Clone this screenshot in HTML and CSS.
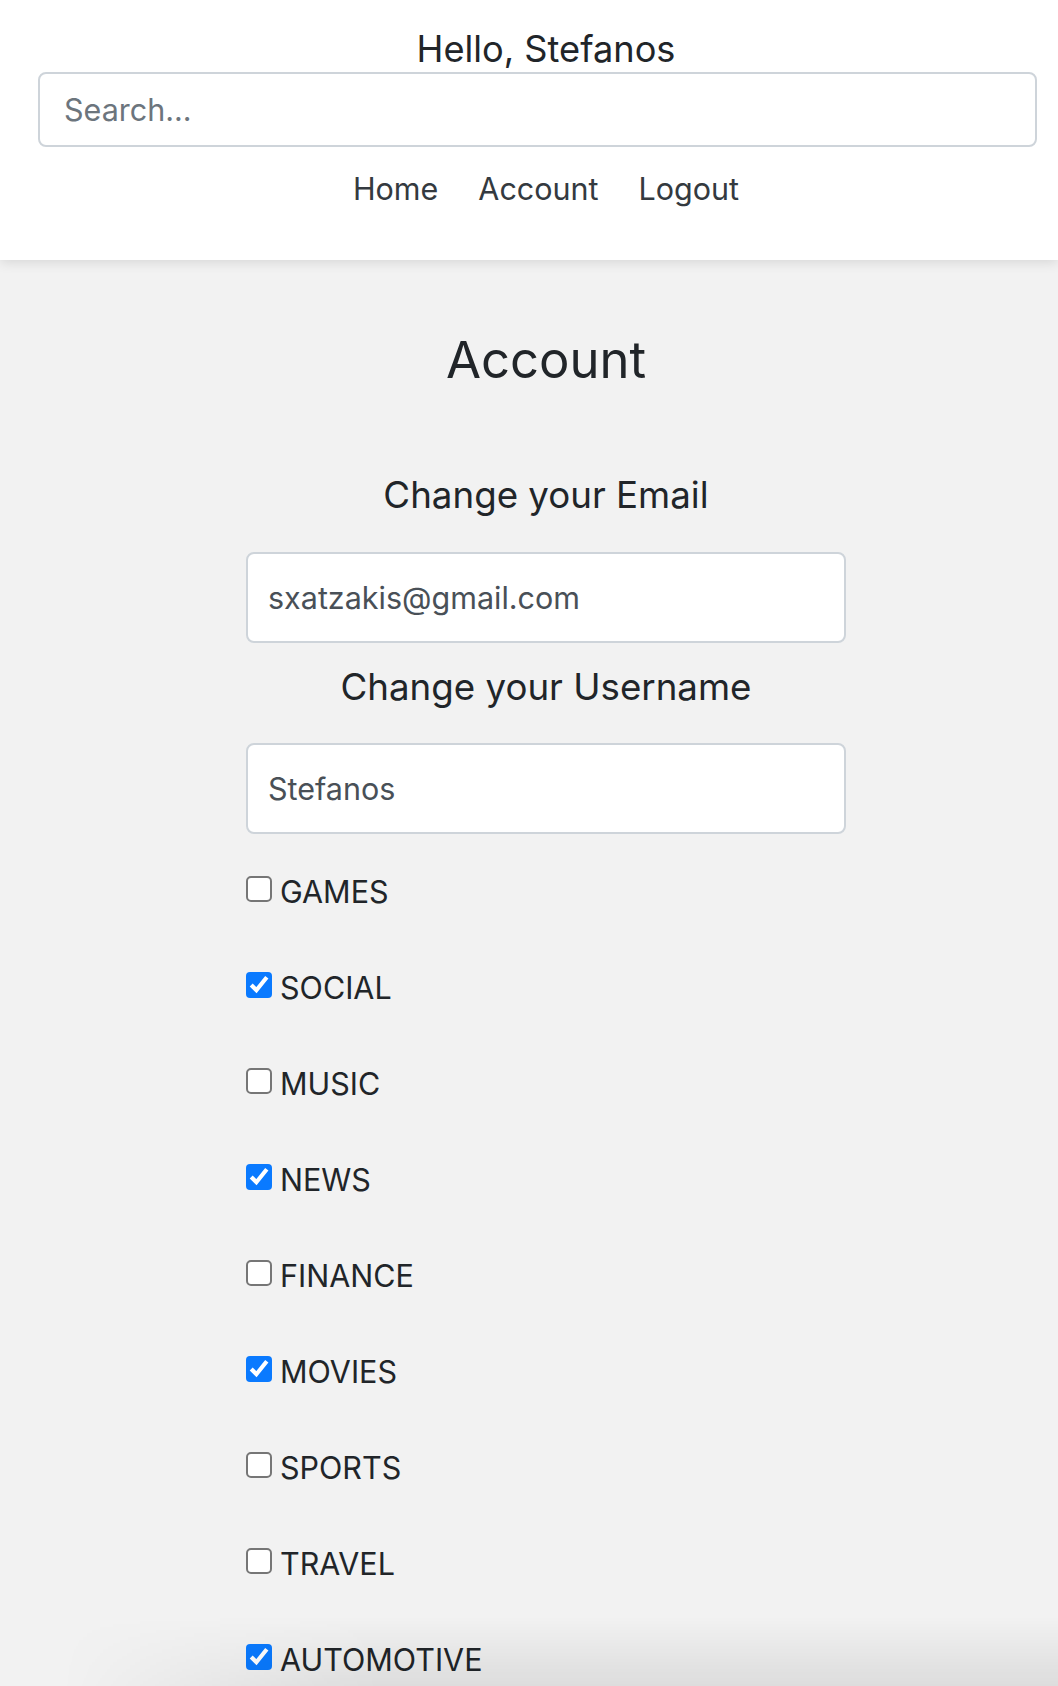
FILE: index.html
```html
<!DOCTYPE html>
<html lang="en">
<head>
<meta charset="utf-8">
<title>Account</title>
<link rel="stylesheet" href="styles.css">
</head>
<body>
<header class="topbar">
  <div class="topbar-inner">
    <h5 class="greeting">Hello, Stefanos</h5>
    <input class="search" type="text" placeholder="Search...">
    <nav class="nav">
      <a class="nav-link" href="#">Home</a>
      <a class="nav-link" href="#">Account</a>
      <a class="nav-link" href="#">Logout</a>
    </nav>
  </div>
</header>
<main class="account">
  <h3 class="page-title">Account</h3>
  <form class="account-form">
    <h5 class="field-title">Change your Email</h5>
    <input class="field" type="email" value="sxatzakis@gmail.com">
    <h5 class="field-title">Change your Username</h5>
    <input class="field" type="text" value="Stefanos">
    <div class="categories">
      <label class="check"><input class="check-box" type="checkbox"><span>GAMES</span></label>
      <label class="check"><input class="check-box" type="checkbox" checked><span>SOCIAL</span></label>
      <label class="check"><input class="check-box" type="checkbox"><span>MUSIC</span></label>
      <label class="check"><input class="check-box" type="checkbox" checked><span>NEWS</span></label>
      <label class="check"><input class="check-box" type="checkbox"><span>FINANCE</span></label>
      <label class="check"><input class="check-box" type="checkbox" checked><span>MOVIES</span></label>
      <label class="check"><input class="check-box" type="checkbox"><span>SPORTS</span></label>
      <label class="check"><input class="check-box" type="checkbox"><span>TRAVEL</span></label>
      <label class="check"><input class="check-box" type="checkbox" checked><span>AUTOMOTIVE</span></label>
    </div>
  </form>
</main>
<div class="bottom-shade"></div>
</body>
</html>
```

FILE: styles.css
```css
* {
  box-sizing: border-box;
}

html, body {
  margin: 0;
  padding: 0;
}

body {
  background: #f2f2f2;
  color: #212529;
  font-family: "Inter", "Liberation Sans", sans-serif;
}

.topbar {
  background: #ffffff;
  box-shadow: 0 2px 12px rgba(0, 0, 0, 0.12);
  position: relative;
  z-index: 1;
}

.topbar-inner {
  padding: 26px 4px 31px 38px;
  display: flex;
  flex-direction: column;
  align-items: center;
}

.greeting {
  margin: 0;
  font-size: 36.2px;
  font-weight: 400;
  line-height: 46px;
  color: #212529;
}

.search {
  align-self: flex-start;
  width: 999px;
  height: 75px;
  border: 2px solid #ced4da;
  border-radius: 8px;
  padding: 0 24px;
  font-family: inherit;
  font-size: 30.5px;
  color: #495057;
  background: #fff;
  outline: none;
}

.search::placeholder {
  color: #6c757d;
}

.nav {
  display: flex;
  margin-top: 2px;
}

.nav-link {
  display: block;
  padding: 16px 20px;
  font-size: 30.5px;
  line-height: 48px;
  color: #343a40;
  text-decoration: none;
}

.account {
  padding: 68px 0 0 34px;
  display: flex;
  flex-direction: column;
  align-items: center;
}

.page-title {
  margin: 0 0 81px;
  font-size: 50.8px;
  font-weight: 400;
  line-height: 63px;
}

.account-form {
  width: 600px;
  display: flex;
  flex-direction: column;
}

.field-title {
  margin: 0 0 34px;
  text-align: center;
  font-size: 36.7px;
  font-weight: 400;
  line-height: 45.6px;
}

.field {
  width: 600px;
  height: 91px;
  margin: 0 0 21px;
  padding: 0 20px;
  border: 2px solid #ced4da;
  border-radius: 8px;
  background: #fff;
  font-family: inherit;
  font-size: 30.5px;
  color: #495057;
  outline: none;
}

.categories {
  margin-top: 13px;
  display: flex;
  flex-direction: column;
  gap: 48px;
}

.check {
  display: flex;
  align-items: flex-start;
  height: 48px;
  font-size: 30.5px;
  line-height: 48px;
  color: #212529;
}

.check-box {
  zoom: 2;
  width: 13px;
  height: 13px;
  margin: 4px 4px 0 0;
  accent-color: #0a7aff;
}

.bottom-shade {
  position: fixed;
  left: 0;
  right: 0;
  bottom: 0;
  height: 70px;
  pointer-events: none;
  background: linear-gradient(to bottom, rgba(0, 0, 0, 0), rgba(0, 0, 0, 0.085));
  -webkit-mask-image: linear-gradient(to right, transparent 60px, #000 380px);
  mask-image: linear-gradient(to right, transparent 60px, #000 380px);
  z-index: 2;
}
```
